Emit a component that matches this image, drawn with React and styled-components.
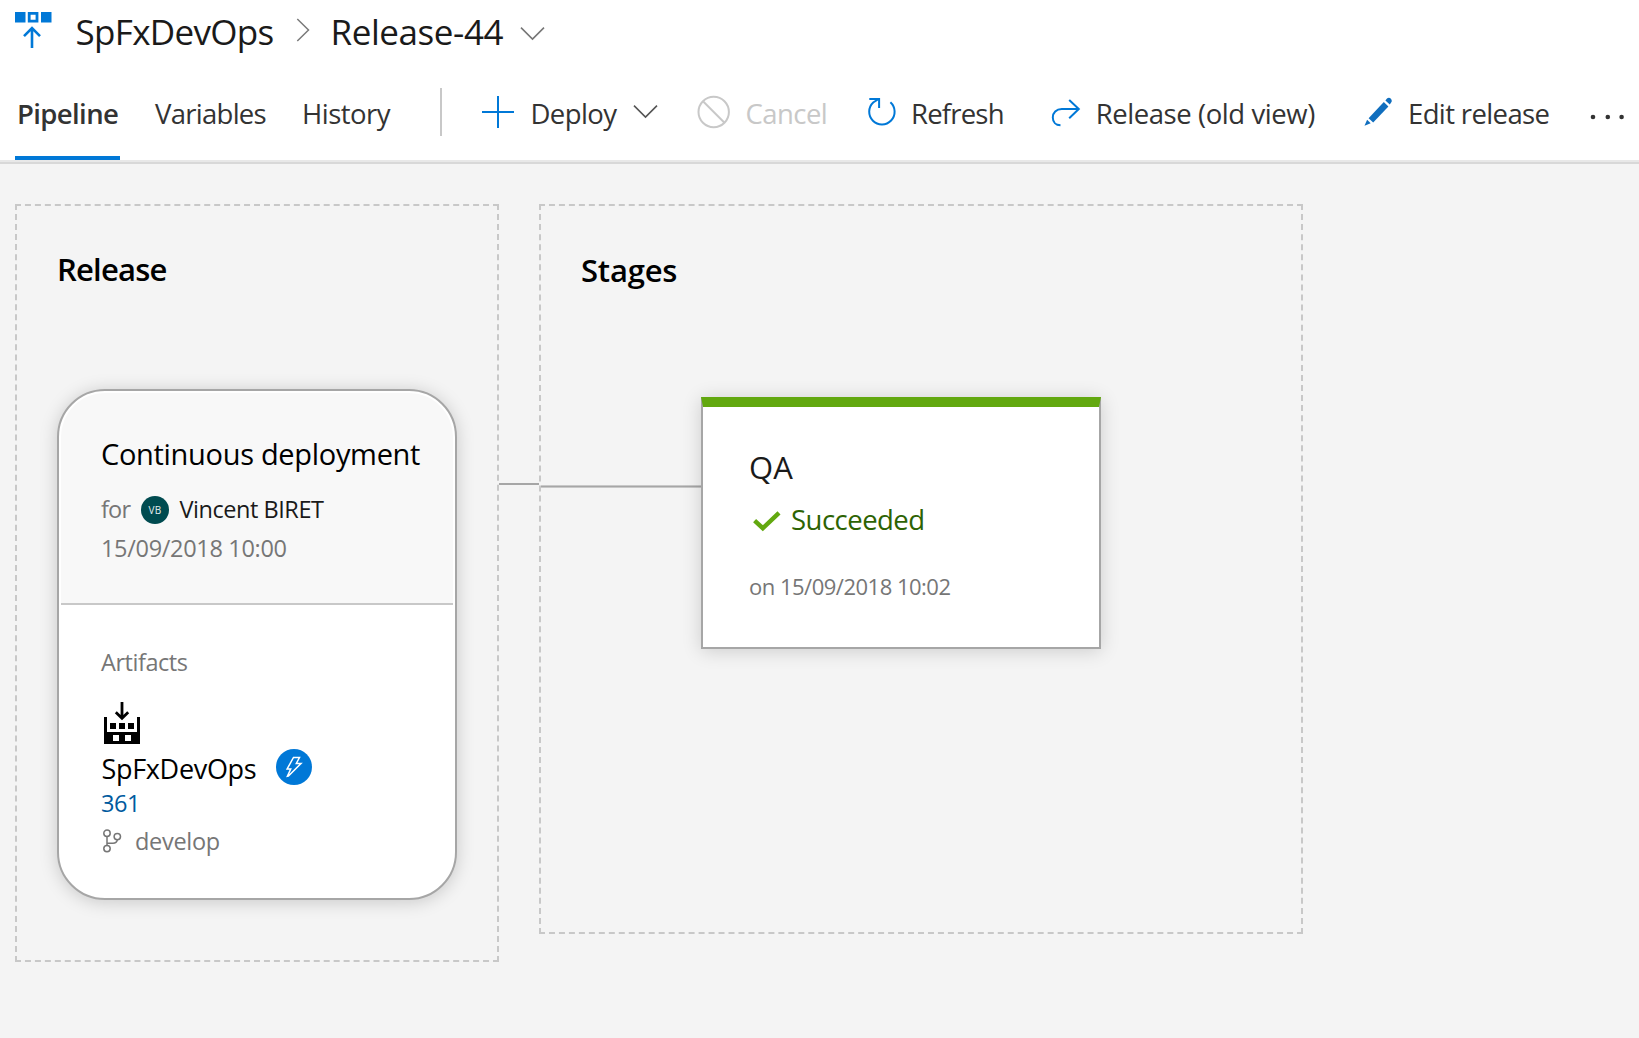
import React from "react";
import styled, { createGlobalStyle } from "styled-components";

const GlobalStyle = createGlobalStyle`
  * { box-sizing: border-box; }
  body {
    margin: 0;
    background: #f4f4f4;
    font-family: "Open Sans", "Noto Sans", sans-serif;
    color: #000;
    overflow: hidden;
  }
  svg { display: block; flex: none; overflow: visible; }
`;

const Page = styled.div`
  display: flex;
  flex-direction: column;
  height: 1038px;
`;

const Header = styled.header`
  background: #fff;
  height: 164px;
  flex: none;
  border-bottom: 2px solid #d8d8d8;
  box-shadow: inset 0 -2px 0 #e8e8e8;
`;

const TitleRow = styled.div`
  display: flex;
  align-items: center;
  height: 62px;
  padding-left: 15px;
`;

const Label = styled.span`
  display: block;
  flex: none;
  white-space: nowrap;
  font-size: ${(p) => p.$size}px;
  line-height: ${(p) => p.$line}px;
  font-weight: ${(p) => p.$weight || 400};
  letter-spacing: ${(p) => p.$track || 0}px;
  color: ${(p) => p.$color || "inherit"};
  width: ${(p) => (p.$w ? `${p.$w}px` : "auto")};
  margin-left: ${(p) => p.$ml || 0}px;
  margin-top: ${(p) => p.$mt || 0}px;
`;

const Crumb = styled(Label).attrs({ $size: 35, $line: 62, $mt: 2, $color: "#1a1a1a" })``;

const Slot = styled.span`
  display: block;
  flex: none;
  margin-left: ${(p) => p.$ml || 0}px;
  margin-top: ${(p) => p.$mt || 0}px;
`;

const Toolbar = styled.nav`
  display: flex;
  align-items: center;
  height: 94px;
  margin-top: 4px;
  padding-left: 15px;
`;

const Tab = styled.a`
  display: flex;
  align-items: center;
  flex: none;
  height: 94px;
  width: ${(p) => p.$w}px;
  margin-left: ${(p) => p.$ml || 0}px;
  padding-left: ${(p) => (p.$active ? 2 : 0)}px;
  box-shadow: ${(p) => (p.$active ? "inset 0 -4px 0 #0078d7" : "none")};
`;

const Divider = styled.span`
  width: 2px;
  height: 48px;
  margin: -2px 0 0 49px;
  background: #c8c8c8;
`;

const Command = styled.button`
  display: flex;
  align-items: center;
  flex: none;
  padding: 0;
  border: 0;
  background: none;
  font: inherit;
  gap: ${(p) => p.$gap}px;
  margin-left: ${(p) => p.$ml}px;
`;

const BarText = styled(Label).attrs((p) => ({
  $size: 27.5,
  $line: 38,
  $mt: 2,
  $color: p.$color || "#333",
}))``;

const Canvas = styled.main`
  display: flex;
  align-items: flex-start;
  flex: 1;
  padding: 40px 15px;
`;

const Panel = styled.section`
  flex: none;
  width: ${(p) => p.$w}px;
  height: ${(p) => p.$h}px;
  border: 2px dashed #c8c8c8;
`;

const PanelTitle = styled.h2`
  margin: 0 0 ${(p) => p.$mb}px;
  padding: ${(p) => p.$pt}px 0 0 ${(p) => p.$pl}px;
  font-size: 31px;
  line-height: 44px;
  font-weight: 600;
  letter-spacing: ${(p) => p.$track}px;
`;

const Link = styled.div`
  flex: none;
  width: 40px;
  height: 2px;
  margin-top: 279px;
  background: #a6a6a6;
`;

const StageLink = styled.div`
  flex: none;
  width: 160px;
  height: 3px;
  margin-top: 88px;
  background: #a6a6a6;
  border: solid #c8c8c8;
  border-width: 1px 0;
`;

const ReleaseCard = styled.article`
  width: 400px;
  height: 511px;
  margin-left: 40px;
  padding: 2px;
  background: #fff;
  border: 2px solid #a6a6a6;
  border-radius: 48px;
  box-shadow: 0 2px 18px rgba(0, 0, 0, 0.18);
`;

const CardHead = styled.div`
  height: 212px;
  padding: 41px 0 0 40px;
  background: #f8f8f8;
  border-bottom: 2px solid #c8c8c8;
  border-radius: 44px 44px 0 0;
`;

const CardBody = styled.div`
  padding: 41px 0 0 40px;
`;

const Line = styled.div`
  display: flex;
  align-items: ${(p) => p.$align || "center"};
  height: ${(p) => p.$h}px;
  margin-top: ${(p) => p.$mt}px;
`;

const Small = styled(Label).attrs((p) => ({
  $size: 23.5,
  $line: 32,
  $color: p.$color || "#767676",
}))``;

const Avatar = styled.span`
  display: flex;
  align-items: center;
  justify-content: center;
  width: 28px;
  height: 28px;
  margin: 2px 0 0 9.5px;
  border-radius: 50%;
  background: #004b50;
  color: #e6eeee;
  font-size: 10px;
  letter-spacing: 0.4px;
`;

const StageRow = styled.div`
  display: flex;
  align-items: flex-start;
`;

const StageCard = styled.article`
  flex: none;
  width: 400px;
  height: 252px;
  padding: 38px 0 0 46px;
  background: #fff;
  border: 2px solid #a6a6a6;
  border-top: 10px solid #62a80f;
  box-shadow: 0 2px 18px rgba(0, 0, 0, 0.16);
`;

const ReleaseLogo = () => (
  <svg width="37" height="38" fill="none" stroke="#0078d7">
    <path d="M0 0h10.5v10.5H0zM26 0h10.5v10.5H26z" fill="#0078d7" stroke="none" />
    <path d="M14.2 1.4h7.8v7.8h-7.8z" strokeWidth="2.8" />
    <path d="M17 36V17M9 24.2l8-8 8 8" strokeWidth="2.6" />
  </svg>
);

const ChevronRight = () => (
  <svg width="14" height="26" fill="none" stroke="#7a7a7a" strokeWidth="1.5">
    <path d="M1.3 1L12.5 12 1.3 23" />
  </svg>
);

const ChevronDown = ({ color = "#777" }) => (
  <svg width="25" height="13" fill="none" stroke={color} strokeWidth="1.6">
    <path d="M1 .6l11.5 11.4L24 .6" />
  </svg>
);

const PlusIcon = () => (
  <svg width="32" height="34" stroke="#0078d7" strokeWidth="2">
    <path d="M0 16h32M16 0v32" />
  </svg>
);

const CancelIcon = () => (
  <svg width="34" height="34" fill="none" stroke="#c8c8c8" strokeWidth="2">
    <circle cx="16.7" cy="16" r="15.2" />
    <path d="M6 5.2l21.5 21.5" />
  </svg>
);

const RefreshIcon = () => (
  <svg width="30" height="34" fill="none" stroke="#0078d7" strokeWidth="2">
    <path d="M23.4 6.3A12.7 12.7 0 1 1 6.2 6.5L11.6 3" />
    <path d="M2.3 3h9.8v9" />
  </svg>
);

const RedoIcon = () => (
  <svg width="30" height="34" fill="none" stroke="#0078d7" strokeWidth="2">
    <path d="M28 13H10.8C5.2 13 1.8 16.8 1.8 21.4c0 4.5 3 7.7 7.7 7.9" />
    <path d="M18.2 4l9.6 9-9.6 9.2" />
  </svg>
);

const PencilIcon = () => (
  <svg width="30" height="34" fill="#106ebe">
    <path d="M4.6 22.2L19.8 6l4.6 4.4L9.2 26.6z" />
    <path d="M.5 29.8l2.6-6 3.6 3.5z" />
    <path d="M21.4 4.4l1.6-1.8c1.2-1.2 2.9-1 3.9.1s1.3 2.7.2 3.9L25.8 8.6z" />
  </svg>
);

const MoreIcon = () => (
  <svg width="36" height="10" fill="#333">
    <circle cx="4" cy="7" r="2.3" />
    <circle cx="18.8" cy="7" r="2.3" />
    <circle cx="32.6" cy="7" r="2.3" />
  </svg>
);

const BuildIcon = () => (
  <svg width="36" height="42">
    <path d="M0 15h3v15h30V15h3v27H0zM9 33v6h6v-6zM21 33v6h6v-6z" fillRule="evenodd" />
    <path d="M6 21h6v6H6zM15 21h6v6h-6zM24 21h6v6h-6z" />
    <path d="M18 0v16M11.8 10.3l6.2 6 6.2-6" fill="none" stroke="#000" strokeWidth="2.8" />
  </svg>
);

const TriggerBadge = () => (
  <svg width="36" height="36">
    <circle cx="18" cy="18" r="18" fill="#0078d7" />
    <path
      d="M17.5 8.500h6l-3.200 6h4.700L12.400 27l-1 .2 3.300-7.200h-3.600z"
      fill="none"
      stroke="#fff"
      strokeWidth="1.5"
    />
  </svg>
);

const BranchIcon = () => (
  <svg width="20" height="24" fill="none" stroke="#767676" strokeWidth="1.5">
    <circle cx="5" cy="4.2" r="3.2" />
    <circle cx="5" cy="19.6" r="3.2" />
    <circle cx="15.3" cy="7.6" r="3.2" />
    <path d="M5 7.400v9M15.300 10.800c-.4 2.200-2 3.400-4.300 3.400H5" />
  </svg>
);

const CheckIcon = () => (
  <svg width="28" height="20" fill="none" stroke="#62a80f" strokeWidth="4.4">
    <path d="M1.6 9.600l8.200 7.600L26 1.800" />
  </svg>
);

export default function App() {
  return (
    <Page>
      <GlobalStyle />
      <Header>
        <TitleRow>
          <ReleaseLogo />
          <Crumb $track={-0.68} $w={198} $ml={23.5}>SpFxDevOps</Crumb>
          <Slot $ml={22.5}><ChevronRight /></Slot>
          <Crumb $track={-0.42} $w={173} $ml={20.5}>Release-44</Crumb>
          <Slot $ml={16} $mt={5}><ChevronDown /></Slot>
        </TitleRow>
        <Toolbar>
          <Tab $active $w={105}><BarText $weight={600} $track={-0.62}>Pipeline</BarText></Tab>
          <Tab $w={111} $ml={35}><BarText $track={-0.72}>Variables</BarText></Tab>
          <Tab $w={89} $ml={36}><BarText $track={-0.52}>History</BarText></Tab>
          <Divider />
          <Command $ml={40} $gap={16}>
            <PlusIcon />
            <BarText $w={87} $track={-0.56}>Deploy</BarText>
            <Slot $mt={-3}><ChevronDown color="#555" /></Slot>
          </Command>
          <Command $ml={39} $gap={14.5}>
            <CancelIcon />
            <BarText $w={80.5} $track={-0.55} $color="#c8c8c8">Cancel</BarText>
          </Command>
          <Command $ml={41} $gap={14}>
            <RefreshIcon />
            <BarText $w={92} $track={-0.8}>Refresh</BarText>
          </Command>
          <Command $ml={48} $gap={14.5}>
            <RedoIcon />
            <BarText $w={219.5} $track={-0.43}>Release (old view)</BarText>
          </Command>
          <Command $ml={49} $gap={14}>
            <PencilIcon />
            <BarText $w={141} $track={-0.63}>Edit release</BarText>
          </Command>
          <Command $ml={40} $gap={0}>
            <Slot $mt={4}><MoreIcon /></Slot>
          </Command>
        </Toolbar>
      </Header>
      <Canvas>
        <Panel $w={484} $h={758}>
          <PanelTitle $pt={41} $pl={40} $mb={98} $track={-0.79}>Release</PanelTitle>
          <ReleaseCard>
            <CardHead>
              <Label $size={29} $line={40} $track={-0.31}>Continuous deployment</Label>
              <Line $h={32} $mt={19}>
                <Small $w={30.5} $track={-0.8}>for</Small>
                <Avatar>VB</Avatar>
                <Small $ml={10.5} $track={-0.46} $color="#1a1a1a">Vincent BIRET</Small>
              </Line>
              <Small $mt={7} $track={-0.32}>15/09/2018 10:00</Small>
            </CardHead>
            <CardBody>
              <Small $track={-0.45}>Artifacts</Small>
              <Slot $ml={3} $mt={24}><BuildIcon /></Slot>
              <Line $h={36} $mt={5} $align="flex-start">
                <Label $size={27} $line={39} $track={-0.32} $w={154.5} $ml={0.5}>SpFxDevOps</Label>
                <Slot $ml={20}><TriggerBadge /></Slot>
              </Line>
              <Small $mt={2} $track={-0.4} $color="#005a9e">361</Small>
              <Line $h={32} $mt={6}>
                <Slot $ml={1}><BranchIcon /></Slot>
                <Small $ml={13} $track={-0.3}>develop</Small>
              </Line>
            </CardBody>
          </ReleaseCard>
        </Panel>
        <Link />
        <Panel $w={764} $h={730}>
          <PanelTitle $pt={42} $pl={40} $mb={105} $track={-0.2}>Stages</PanelTitle>
          <StageRow>
            <StageLink />
            <StageCard>
              <Label $size={31} $line={44} $track={0.2} $color="#1a1a1a">QA</Label>
              <Line $h={38} $mt={12}>
                <Slot $ml={4} $mt={2}><CheckIcon /></Slot>
                <Label $size={27.5} $line={38} $track={-0.52} $ml={10} $color="#2d6303">Succeeded</Label>
              </Line>
              <Label $size={22} $line={30} $track={-0.5} $mt={31.5} $color="#767676">on 15/09/2018 10:02</Label>
            </StageCard>
          </StageRow>
        </Panel>
      </Canvas>
    </Page>
  );
}
